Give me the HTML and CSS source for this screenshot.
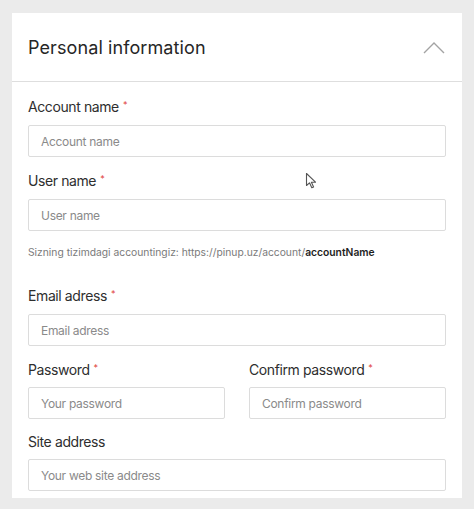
FILE: index.html
```html
<!DOCTYPE html>
<html lang="en">
<head>
<meta charset="utf-8">
<link rel="stylesheet" href="styles.css">
</head>
<body>
<div class="card">
  <div class="card-header">
    <h2 class="title">Personal information</h2>
    <svg class="chevron" width="22" height="13" viewBox="0 0 22 13"><polyline points="1,12 11,2 21,12" fill="none" stroke="#a3a3a3" stroke-width="1.4"/></svg>
  </div>
  <div class="card-body">
    <div class="field">
      <label class="label">Account name<span class="req">*</span></label>
      <div class="input">Account name</div>
    </div>
    <div class="field">
      <label class="label">User name<span class="req">*</span></label>
      <div class="input">User name</div>
    </div>
    <p class="help">Sizning tizimdagi accountingiz: https://pinup.uz/account/<b>accountName</b></p>
    <div class="field">
      <label class="label">Email adress<span class="req">*</span></label>
      <div class="input">Email adress</div>
    </div>
    <div class="row">
      <div class="field tight">
        <label class="label">Password<span class="req">*</span></label>
        <div class="input">Your password</div>
      </div>
      <div class="field tight">
        <label class="label">Confirm password<span class="req">*</span></label>
        <div class="input">Confirm password</div>
      </div>
    </div>
    <div class="field tight">
      <label class="label">Site address</label>
      <div class="input">Your web site address</div>
    </div>
  </div>
  <svg class="cursor" width="14" height="18" viewBox="0 0 14 18"><path d="M1.5,1.5 L1.5,13.5 L4.5,10.8 L6.8,15.8 L8.6,15 L6.4,10.2 L10.5,10.2 Z" fill="#fff" stroke="#555" stroke-width="1.1" stroke-linejoin="round"/></svg>
</div>
</body>
</html>
```
FILE: styles.css
```css
* { box-sizing: border-box; }
html, body { margin: 0; padding: 0; }
body {
  background: #ebebeb;
  font-family: Inter, "Noto Sans", "Liberation Sans", sans-serif;
  padding: 13px 12px 0;
  height: 509px;
  overflow: hidden;
}
.card {
  position: relative;
  background: #fff;
  width: 450px;
  height: 485px;
}
.card-header {
  height: 69px;
  border-bottom: 1px solid #dedede;
  display: flex;
  align-items: center;
  justify-content: space-between;
  padding: 0 17px 0 16px;
}
.title {
  margin: 0;
  font-size: 18px;
  font-weight: 400;
  color: #262626;
  letter-spacing: 0.1px;
}
.chevron { display: block; }
.card-body {
  padding: 16px 16px 0 16px;
  display: flex;
  flex-direction: column;
}
.field {
  display: flex;
  flex-direction: column;
  gap: 9px;
  margin-bottom: 15px;
}
.field.tight { gap: 8px; margin-bottom: 14px; }
.label {
  font-size: 14px;
  line-height: 18px;
  color: #2e2e2e;
  letter-spacing: -0.4px;
}
.req {
  color: #e0413b;
  font-size: 9px;
  vertical-align: top;
  position: relative;
  top: -2px;
  margin-left: 4px;
}
.input {
  height: 32px;
  border: 1px solid #dcdcdc;
  border-radius: 2px;
  padding: 0 12px;
  display: flex;
  align-items: center;
  font-size: 12px;
  color: #8a8a8a;
  letter-spacing: -0.3px;
}
.help {
  margin: -1px 0 28px;
  font-size: 10.3px;
  line-height: 14px;
  color: #7a7a7a;
}
.help b { color: #1e1e1e; font-weight: 600; }
.row {
  display: grid;
  grid-template-columns: 197px 197px;
  justify-content: space-between;
}
.cursor {
  position: absolute;
  left: 293px;
  top: 159px;
}
```
